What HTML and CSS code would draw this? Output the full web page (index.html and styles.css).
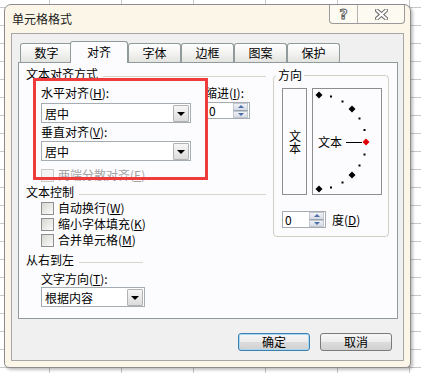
FILE: index.html
```html
<!DOCTYPE html>
<html lang="zh-CN">
<head>
  <meta charset="UTF-8">
  <title>单元格格式</title>
  <link rel="stylesheet" href="styles.css">
</head>
<body>

<div class="dialog">
  <div class="titlebar">
    <span class="title">单元格格式</span>
    <div class="caption-buttons">
      <span class="cap-btn help">?</span>
      <span class="cap-btn close">
        <svg width="13" height="11" viewBox="0 0 13 11">
          <path d="M2 1.5 L11 9.5 M11 1.5 L2 9.5" stroke="#6b6b6b" stroke-width="4" stroke-linecap="square"/>
          <path d="M2 1.5 L11 9.5 M11 1.5 L2 9.5" stroke="#fff" stroke-width="2" stroke-linecap="square"/>
        </svg>
      </span>
    </div>
  </div>

  <div class="client">
    <div class="tabs">
      <div class="tab">数字</div>
      <div class="tab active">对齐</div>
      <div class="tab">字体</div>
      <div class="tab">边框</div>
      <div class="tab">图案</div>
      <div class="tab">保护</div>
    </div>

    <div class="panel">
      <div class="left-col">
        <div class="section-title">文本对齐方式</div>

        <div class="align-block">
          <div class="field-main">
            <div class="label">水平对齐(<u>H</u>):</div>
            <div class="combo"><span>居中</span><span class="combo-arrow"></span></div>
            <div class="label gap2">垂直对齐(<u>V</u>):</div>
            <div class="combo"><span>居中</span><span class="combo-arrow"></span></div>
          </div>
          <div class="field-indent">
            <div class="label">缩进(<u>I</u>):</div>
            <div class="spin">
              <span class="spin-value">0</span>
              <span class="spin-buttons"><span class="spin-up"></span><span class="spin-down"></span></span>
            </div>
          </div>
        </div>

        <div class="check disabled justify-row"><span class="check-box"></span>两端分散对齐(<u>E</u>)</div>

        <div class="section-title control-title">文本控制</div>
        <div class="check"><span class="check-box"></span>自动换行(<u>W</u>)</div>
        <div class="check"><span class="check-box"></span>缩小字体填充(<u>K</u>)</div>
        <div class="check"><span class="check-box"></span>合并单元格(<u>M</u>)</div>

        <div class="section-title short rtl-title">从右到左</div>
        <div class="label sub">文字方向(<u>T</u>):</div>
        <div class="combo narrow"><span>根据内容</span><span class="combo-arrow"></span></div>
      </div>

      <fieldset class="orientation">
        <legend>方向</legend>
        <div class="orient-row">
          <div class="vtext"><span>文本</span></div>
          <div class="dial">
            <svg width="68" height="105" viewBox="0 0 68 105">
              <g fill="#000">
                <polygon points="6,2.5 9.5,6 6,9.5 2.5,6"/>
                <rect x="17" y="6.5" width="2" height="2"/>
                <rect x="28.5" y="11.5" width="2" height="2"/>
                <polygon points="39,16.5 42.5,20 39,23.5 35.5,20"/>
                <rect x="45.5" y="28.5" width="2" height="2"/>
                <rect x="50.5" y="40" width="2" height="2"/>
                <rect x="50.5" y="64.5" width="2" height="2"/>
                <rect x="45.5" y="75.5" width="2" height="2"/>
                <polygon points="39,82.5 42.5,86 39,89.5 35.5,86"/>
                <rect x="28.5" y="92.5" width="2" height="2"/>
                <rect x="17" y="97.5" width="2" height="2"/>
                <polygon points="6,96.5 9.5,100 6,103.5 2.5,100"/>
              </g>
              <text x="5" y="57.5" font-size="12" font-family="Noto Sans CJK SC, sans-serif">文本</text>
              <rect x="33" y="53" width="16" height="1" fill="#000"/>
              <polygon points="53,49.5 56.5,53 53,56.5 49.5,53" fill="#e00000"/>
            </svg>
          </div>
        </div>
        <div class="degree-row">
          <div class="spin">
            <span class="spin-value">0</span>
            <span class="spin-buttons"><span class="spin-up"></span><span class="spin-down"></span></span>
          </div>
          <span class="degree-label">度(<u>D</u>)</span>
        </div>
      </fieldset>

      <div class="highlight"></div>
    </div>

    <div class="actions">
      <button class="btn default">确定</button>
      <button class="btn">取消</button>
    </div>
  </div>
</div>

</body>
</html>
```

FILE: styles.css
```css
body {
    margin: 0;
    width: 421px;
    height: 373px;
    overflow: hidden;
    font-family: "Noto Sans CJK SC", "Liberation Sans", sans-serif;
    font-size: 12px;
    color: #000;
    background-color: #fff;
    background-image:
        repeating-linear-gradient(to right, transparent 0, transparent 49px, #c8c8c8 49px, #c8c8c8 50px, transparent 50px, transparent 72px),
        repeating-linear-gradient(to bottom, transparent 0, transparent 7px, #c8c8c8 7px, #c8c8c8 8px, transparent 8px, transparent 18px);
}

/* window frame */
.dialog {
    box-sizing: border-box;
    width: 407px;
    height: 364px;
    margin: 4px 0 0 4px;
    padding: 0 6px 6px 6px;
    border: 1px solid #8d8d8d;
    border-radius: 7px 7px 5px 5px;
    background: #fbf6e8;
    box-shadow: 2px 2px 3px rgba(0, 0, 0, 0.25);
    display: flex;
    flex-direction: column;
}

.titlebar {
    height: 28px;
    display: flex;
    align-items: flex-start;
}

.title {
    margin-top: 7px;
    padding-left: 1px;
    line-height: 14px;
    color: #1b1b1b;
}

.caption-buttons {
    margin-left: auto;
    margin-right: -1px;
    display: flex;
    height: 18px;
    border: 1px solid #9a9a9a;
    border-top: none;
    border-radius: 0 0 4px 4px;
    background: #fdfaf1;
}

.cap-btn {
    display: flex;
    align-items: center;
    justify-content: center;
}

.help {
    width: 27px;
    border-right: 1px solid #b4b4b4;
    font-family: "DejaVu Sans", sans-serif;
    font-weight: bold;
    font-size: 14px;
    color: #fff;
    -webkit-text-stroke: 1px #5f5f5f;
}

.close {
    width: 46px;
}

/* dialog body */
.client {
    flex: 1;
    box-sizing: border-box;
    border: 1px solid #a7a7a7;
    background: #f0f0f0;
    padding: 7px 5px 0 6px;
}

.tabs {
    display: flex;
    align-items: flex-end;
    height: 21px;
    padding-left: 2px;
}

.tab {
    box-sizing: border-box;
    width: 53px;
    height: 19px;
    border: 1px solid #919b9c;
    border-bottom: none;
    border-radius: 3px 3px 0 0;
    background: linear-gradient(#ffffff, #f3f3f1 50%, #e3e3df);
    text-align: center;
    line-height: 18px;
}

.tab.active {
    position: relative;
    z-index: 1;
    width: 58px;
    height: 22px;
    margin-left: -3px;
    margin-bottom: -1px;
    background: #fcfcfe;
    line-height: 20px;
}

.panel {
    position: relative;
    box-sizing: border-box;
    height: 257px;
    border: 1px solid #919b9c;
    background: #fcfcfe;
    display: flex;
    align-items: flex-start;
}

.left-col {
    box-sizing: border-box;
    width: 247px;
    padding-left: 7px;
}

.section-title {
    display: flex;
    align-items: center;
    height: 14px;
    line-height: 14px;
    margin-top: 4px;
}

.section-title::after {
    content: "";
    flex: 1;
    height: 0;
    margin: 5px 0 0 5px;
    border-top: 1px solid #d5d5cc;
}

.section-title.short {
    width: 117px;
}

.control-title {
    margin-top: 3px;
}

.rtl-title {
    margin-top: 6px;
}

.label {
    height: 14px;
    line-height: 14px;
}

.label.gap2 {
    margin-top: 2px;
}

.label.sub {
    margin: 5px 0 0 15px;
}

.align-block {
    display: flex;
    margin: 5px 0 0 15px;
}

.field-main {
    width: 150px;
}

.field-main .combo {
    margin-top: 3px;
}

.field-main .gap2 + .combo {
    margin-top: 2px;
}

.field-indent {
    margin-left: 14px;
}

.field-indent .spin {
    margin: 2px 0 0 1px;
}

/* combo box */
.combo {
    box-sizing: border-box;
    width: 150px;
    height: 20px;
    border: 1px solid #a5acb2;
    background: #fff;
    display: flex;
    align-items: center;
    padding-left: 3px;
}

.combo.narrow {
    width: 104px;
    margin: 1px 0 0 15px;
}

.combo-arrow {
    box-sizing: border-box;
    margin-left: auto;
    margin-right: 1px;
    width: 16px;
    height: 17px;
    border: 1px solid #b3b3b3;
    border-radius: 1px;
    background: linear-gradient(#f6f6f6, #dcdcdc);
    display: flex;
    align-items: center;
    justify-content: center;
}

.combo-arrow::before {
    content: "";
    border-left: 4px solid transparent;
    border-right: 4px solid transparent;
    border-top: 4px solid #000;
    margin-top: 1px;
}

/* spin box */
.spin {
    box-sizing: border-box;
    width: 44px;
    height: 17px;
    border: 1px solid #a5acb2;
    background: #fff;
    display: flex;
}

.spin-value {
    flex: 1;
    padding-left: 2px;
    line-height: 15px;
}

.spin-buttons {
    width: 15px;
    display: flex;
    flex-direction: column;
    padding: 0 1px 0 0;
}

.spin-up,
.spin-down {
    flex: 1;
    display: flex;
    align-items: center;
    justify-content: center;
    background: linear-gradient(#f0f2f6, #d6dbe4);
    border: 1px solid #c3c8d0;
}

.spin-up {
    border-bottom-color: #9aa3b0;
}

.spin-up::before {
    content: "";
    border-left: 3px solid transparent;
    border-right: 3px solid transparent;
    border-bottom: 3px solid #4d6ea8;
}

.spin-down::before {
    content: "";
    border-left: 3px solid transparent;
    border-right: 3px solid transparent;
    border-top: 3px solid #4d6ea8;
}

/* check boxes */
.check {
    display: flex;
    align-items: center;
    height: 14px;
    line-height: 14px;
    margin: 2px 0 0 15px;
}

.check.justify-row {
    margin-top: 7px;
}

.check-box {
    box-sizing: border-box;
    width: 13px;
    height: 13px;
    margin-right: 4px;
    border: 1px solid #8f8f8f;
    background: linear-gradient(135deg, #d6d6d2, #fbfbfa);
}

.check.disabled {
    color: #a3a3a3;
}

.check.disabled .check-box {
    border-color: #cacaca;
    background: #f4f4f4;
}

/* orientation group */
.orientation {
    box-sizing: border-box;
    width: 116px;
    margin: 5px 0 0 7px;
    padding: 6px 6px 8px 8px;
    border: 1px solid #d0d0c4;
    border-radius: 4px;
}

.orientation legend {
    margin-left: -6px;
    padding: 0 2px;
    line-height: 14px;
}

.orient-row {
    display: flex;
    gap: 5px;
    height: 107px;
}

.vtext {
    box-sizing: border-box;
    width: 25px;
    border: 1px solid #8e8e8e;
    display: flex;
    align-items: center;
    justify-content: center;
}

.vtext span {
    writing-mode: vertical-rl;
    line-height: 12px;
}

.dial {
    box-sizing: border-box;
    width: 70px;
    border: 1px solid #8e8e8e;
}

.dial svg {
    display: block;
}

.degree-row {
    display: flex;
    align-items: center;
    margin-top: 16px;
}

.degree-label {
    margin-left: 6px;
    line-height: 14px;
}

/* red annotation box */
.highlight {
    position: absolute;
    left: 14px;
    top: 15px;
    box-sizing: border-box;
    width: 175px;
    height: 102px;
    border: 3px solid #ee3b3b;
}

/* bottom buttons */
.actions {
    display: flex;
    justify-content: flex-end;
    gap: 10px;
    margin-top: 14px;
    padding-right: 6px;
}

.btn {
    box-sizing: border-box;
    width: 72px;
    height: 18px;
    padding: 0;
    border: 1px solid #7a7a7a;
    border-radius: 3px;
    background: linear-gradient(#f6f6f6, #ececec 50%, #dcdcdc 51%, #d0d0d0);
    font-family: "Noto Sans CJK SC", "Liberation Sans", sans-serif;
    font-size: 12px;
    line-height: 16px;
    color: #000;
}

.btn.default {
    border-color: #3c7fb1;
    box-shadow: inset 0 0 0 1px #a8d8f4;
}
```
